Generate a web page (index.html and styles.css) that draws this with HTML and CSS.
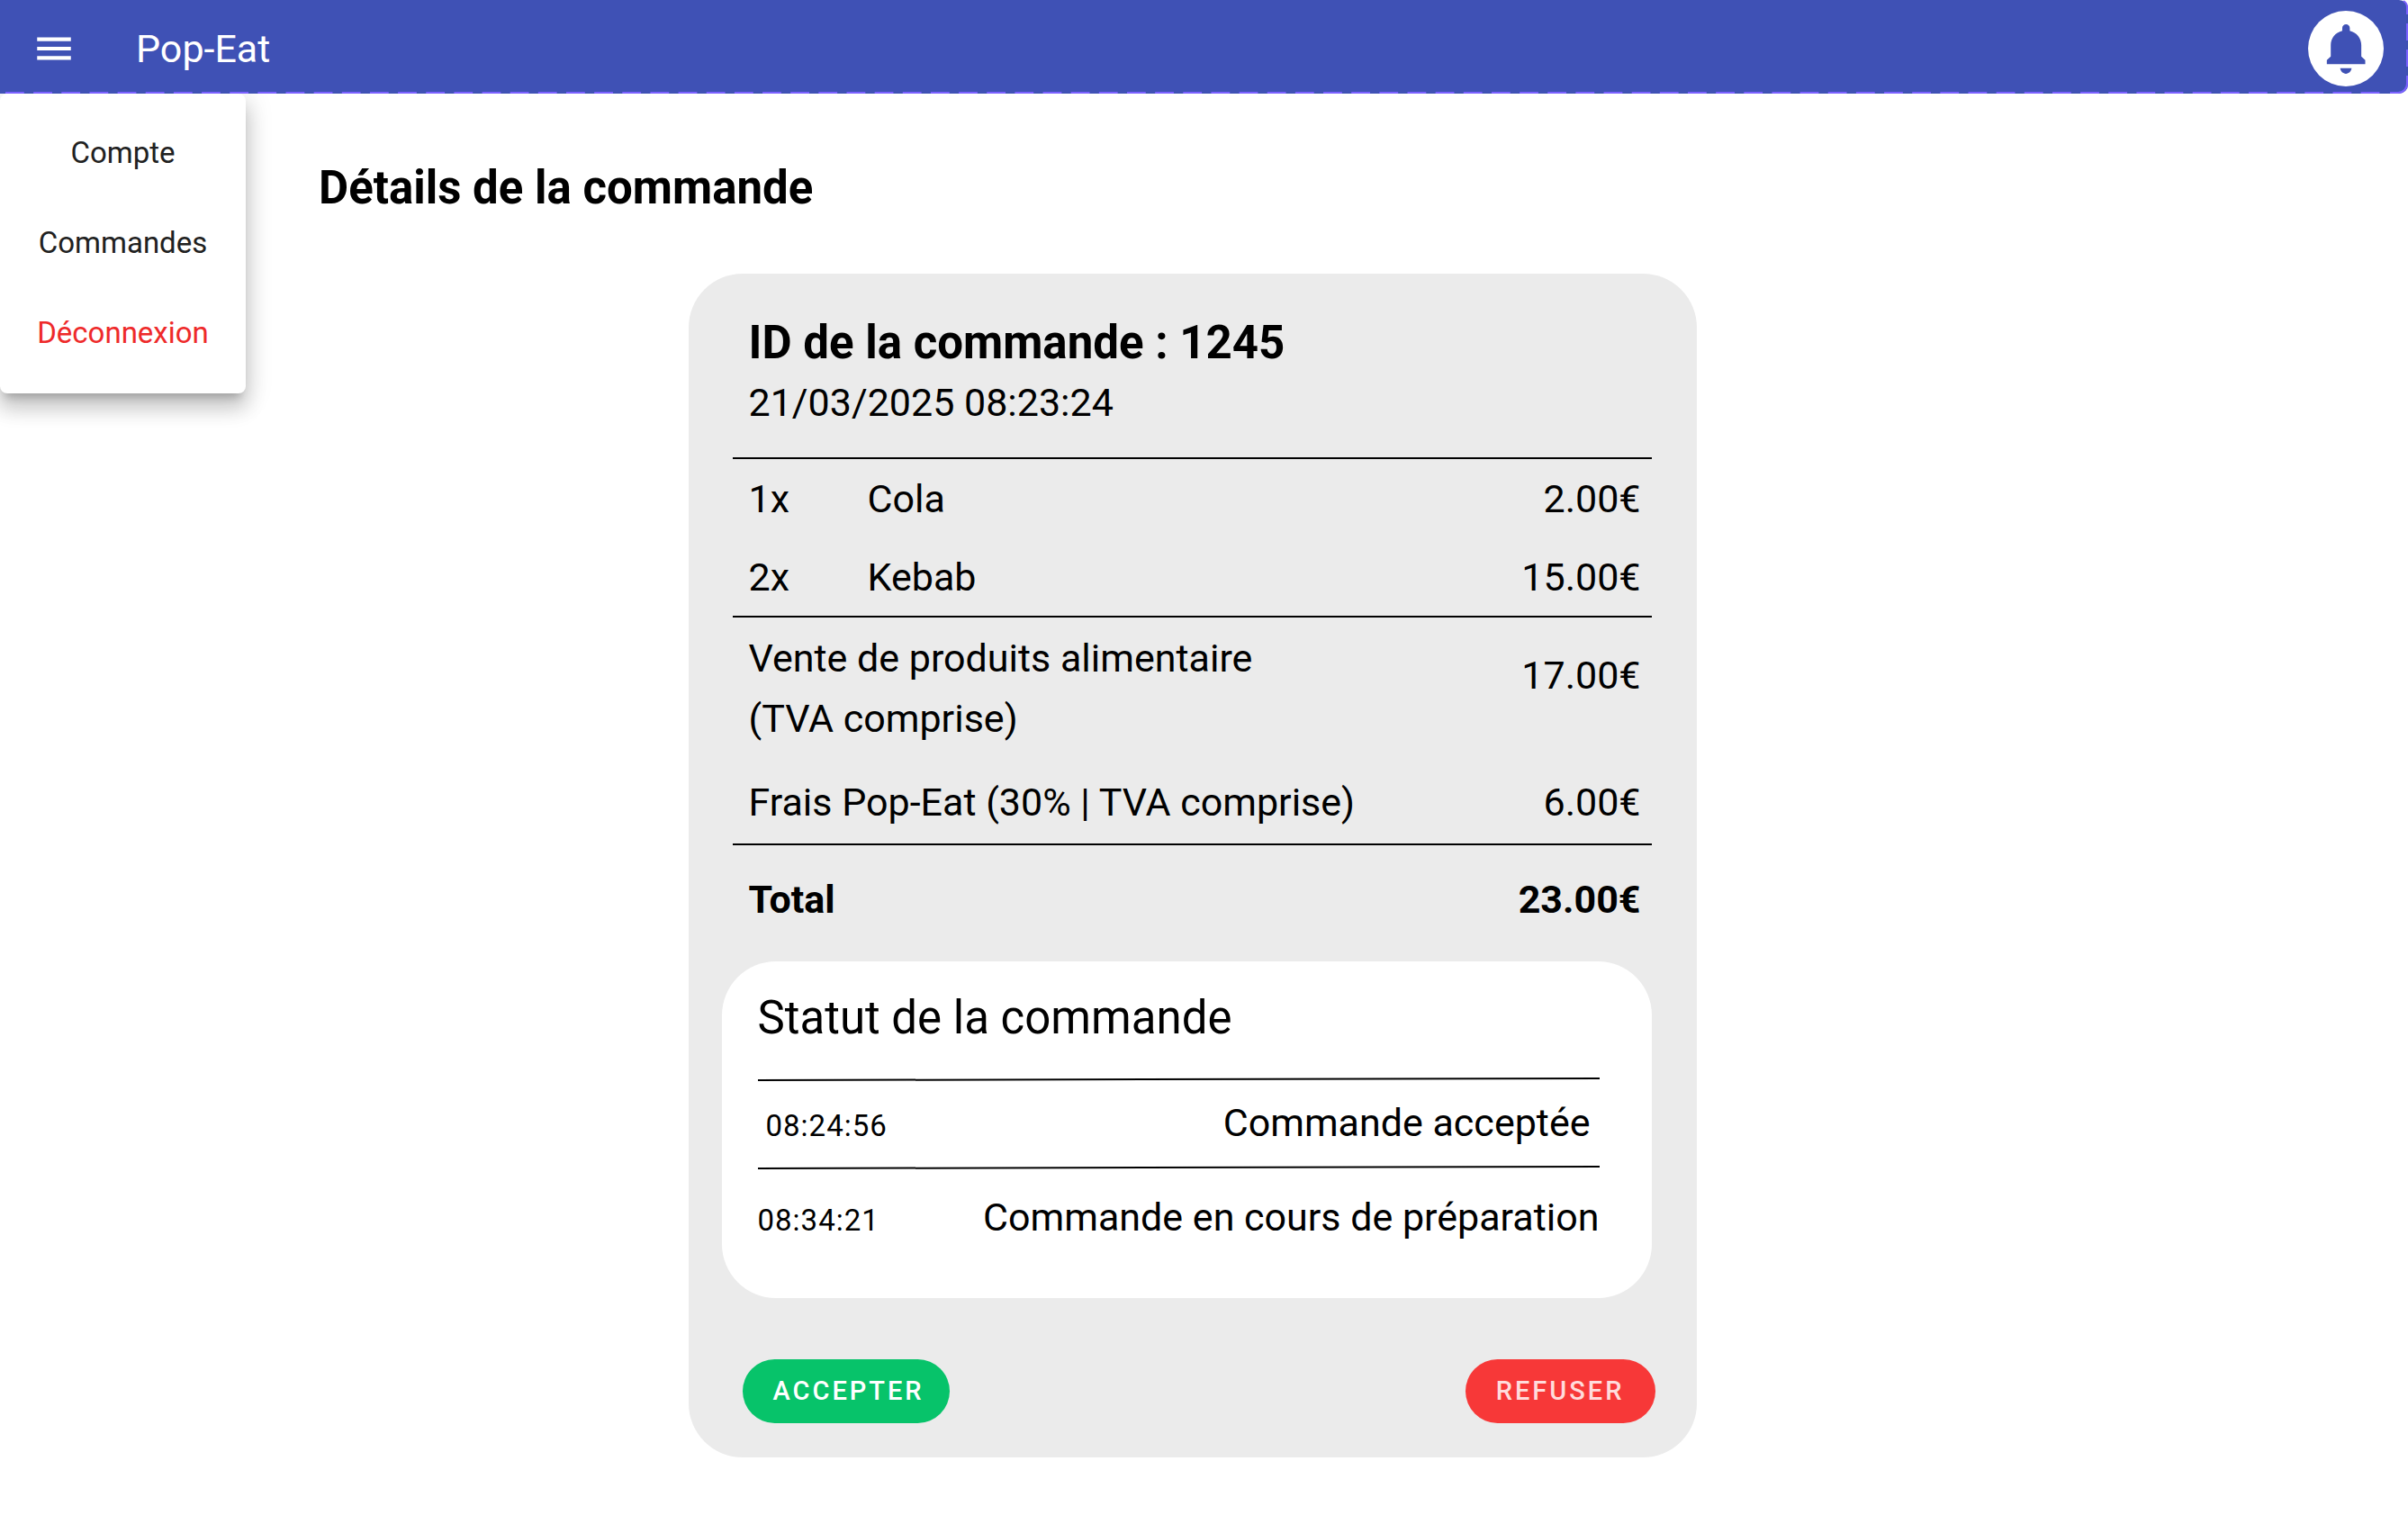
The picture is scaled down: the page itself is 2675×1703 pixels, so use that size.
FILE: index.html
```html
<!DOCTYPE html>
<html lang="fr">
<head>
  <meta charset="utf-8">
  <meta name="viewport" content="width=device-width, initial-scale=1">
  <title>Pop-Eat</title>
  <link rel="stylesheet" href="styles.css">
</head>
<body>
  <header class="app-bar">
    <button class="icon-button" type="button" aria-label="Menu">
      <svg class="menu-icon" viewBox="0 0 24 24" aria-hidden="true"><path fill="currentColor" d="M3 18h18v-2H3v2zm0-5h18v-2H3v2zm0-7v2h18V6H3z"/></svg>
    </button>
    <span class="brand">Pop-Eat</span>
    <button class="icon-button bell-button" type="button" aria-label="Notifications">
      <svg class="bell-icon" viewBox="0 0 250 250" aria-hidden="true">
        <path fill="currentColor" d="M113 66V57a12.500 12.500 0 0 1 25 0v9c23 6 38 24 38 48v37l13 12v13H62v-13l13-12v-37c0-24 15-42 38-48z"/>
        <path fill="currentColor" d="M106 190h38c-2 11-9 18-19 18s-17-7-19-18z"/>
      </svg>
    </button>
    <svg class="dashes" aria-hidden="true"><line x1="6" y1="103" x2="100%" y2="103" stroke-dasharray="20.8 10.35"/></svg>
    <svg class="dashes-end" viewBox="0 0 20 105" aria-hidden="true"><path d="M0 103H9A10 10 0 0 0 19 93V84M19 74V55M19 45V26M19 16V8A8 8 0 0 0 15 1"/></svg>
    <nav class="menu">
      <a class="menu-item" href="#compte">Compte</a>
      <a class="menu-item" href="#commandes">Commandes</a>
      <a class="menu-item menu-item-danger" href="#deconnexion">Déconnexion</a>
    </nav>
  </header>

  <main class="page">
    <h1 class="page-title">Détails de la commande</h1>
    <article class="order">
      <header class="order-header">
        <h2 class="order-title">ID de la commande : 1245</h2>
        <time class="order-date" datetime="2025-03-21T08:23:24">21/03/2025 08:23:24</time>
      </header>
      <table class="receipt">
        <tbody class="items">
          <tr><td class="qty">1x</td><td>Cola</td><td class="price">2.00€</td></tr>
          <tr><td class="qty">2x</td><td>Kebab</td><td class="price">15.00€</td></tr>
        </tbody>
        <tbody class="fees">
          <tr class="sale"><th colspan="2" scope="row">Vente de produits alimentaire<br>(TVA comprise)</th><td class="price">17.00€</td></tr>
          <tr class="fee"><th colspan="2" scope="row">Frais Pop-Eat (30% | TVA comprise)</th><td class="price">6.00€</td></tr>
        </tbody>
        <tbody class="total">
          <tr><th colspan="2" scope="row">Total</th><td class="price">23.00€</td></tr>
        </tbody>
      </table>

      <section class="status">
        <h3 class="status-title">Statut de la commande</h3>
        <svg class="rule" viewBox="0 0 936 4" preserveAspectRatio="none" aria-hidden="true"><path d="M0 3L936 1"/></svg>
        <div class="step step-inset"><time class="step-time">08:24:56</time><span>Commande acceptée</span></div>
        <svg class="rule" viewBox="0 0 936 4" preserveAspectRatio="none" aria-hidden="true"><path d="M0 3L936 1"/></svg>
        <div class="step step-current"><time class="step-time">08:34:21</time><span>Commande en cours de préparation</span></div>
      </section>

      <div class="actions">
        <button class="button button-accept" type="button">ACCEPTER</button>
        <button class="button button-refuse" type="button">REFUSER</button>
      </div>
    </article>
  </main>
</body>
</html>
```
FILE: styles.css
```css
* {
  box-sizing: border-box;
}

body {
  margin: 0;
  background: #fff;
  color: #000;
  font-family: Roboto, sans-serif;
  font-size: 43px;
  line-height: 67px;
}

h1, h2, h3 {
  margin: 0;
  font-size: 51px;
}

button {
  border: 0;
  font: inherit;
  cursor: pointer;
}

/* App bar */
.app-bar {
  position: relative;
  display: flex;
  align-items: center;
  height: 104px;
  padding: 4px 27px 0 35px;
  border-radius: 0 10px 10px 0;
  background: #3f51b5;
  color: #fff;
}

.icon-button {
  display: flex;
  padding: 0;
  background: none;
  color: inherit;
}

.menu-icon {
  width: 50px;
  height: 50px;
}

.brand {
  margin-left: 66px;
}

.bell-button {
  margin-left: auto;
  border-radius: 50%;
  background: #fff;
  color: #3f51b5;
}

.bell-icon {
  width: 84px;
  height: 84px;
}

.dashes,
.dashes-end {
  position: absolute;
  top: 0;
  height: 105px;
  fill: none;
  stroke: #7b61ff;
  stroke-width: 2;
  pointer-events: none;
}

.dashes {
  left: 0;
  width: calc(100% - 30px);
}

.dashes-end {
  right: 0;
  width: 20px;
}

/* Drop-down menu */
.menu {
  position: absolute;
  top: 100%;
  left: 0;
  display: flex;
  flex-direction: column;
  width: 273px;
  padding: 16px 0 17px;
  border-radius: 8px;
  background: #fff;
  box-shadow: 0 10px 10px -6px rgba(0, 0, 0, 0.2), 0 17px 21px 2px rgba(0, 0, 0, 0.14), 0 6px 29px 4px rgba(0, 0, 0, 0.12);
  clip-path: inset(0 -50px -60px 0);
}

.menu-item {
  color: #212121;
  font-size: 33px;
  line-height: 100px;
  text-align: center;
  text-decoration: none;
}

.menu-item-danger {
  color: #ee2a2a;
}

/* Order */
.page {
  padding: 71px 26px 80px 0;
}

.page-title {
  padding-left: 354px;
}

.order {
  max-width: 1120px;
  margin: 62px auto 0;
  padding: 43px 50px 38px 49px;
  border-radius: 60px;
  background: #ebebeb;
}

.order-header {
  display: flex;
  flex-direction: column;
  padding: 0 18px 27px;
}

.receipt {
  width: 100%;
  border-spacing: 0;
}

.receipt th,
.receipt td {
  padding: 0;
  font-weight: 400;
  text-align: left;
  vertical-align: top;
}

.receipt th,
.receipt .qty {
  padding-left: 18px;
}

.receipt .qty {
  width: 150px;
}

.receipt .price {
  padding-right: 12px;
  text-align: right;
}

.receipt tbody tr:first-child > * {
  border-top: 2px solid #000;
}

.items td {
  padding-top: 11px;
  padding-bottom: 9px;
}

.fees .sale th {
  padding-top: 12px;
}

.fees .sale .price {
  padding-top: 31px;
}

.fees .fee > * {
  padding-top: 26px;
  padding-bottom: 12px;
}

.receipt .total tr > * {
  padding-top: 27px;
  font-weight: 700;
}

/* Status */
.status {
  margin: 35px 0 0 -12px;
  padding: 29px 58px 42px 40px;
  border-radius: 60px;
  background: #fff;
}

.status-title {
  margin-bottom: 33px;
  font-weight: 400;
}

.rule {
  display: block;
  width: 100%;
  height: 4px;
  fill: none;
  stroke: #000;
  stroke-width: 2;
}

.step {
  display: flex;
  align-items: baseline;
  justify-content: space-between;
  padding: 13px 0 11px;
}

.step-inset {
  padding-right: 10px;
  padding-left: 9px;
}

.step-current {
  padding-top: 20px;
}

.step-time {
  font-size: 33px;
  letter-spacing: 1px;
}

/* Actions */
.actions {
  display: flex;
  justify-content: space-between;
  margin: 68px -4px 0 11px;
}

.button {
  padding: 0 34px;
  border-radius: 36px;
  color: #fff;
  font-size: 29px;
  font-weight: 500;
  line-height: 71px;
  letter-spacing: 3px;
}

.button-accept {
  padding-right: 28px;
  background: #07c36a;
}

.button-refuse {
  background: #f73838;
  color: #ffdcdc;
}
```
